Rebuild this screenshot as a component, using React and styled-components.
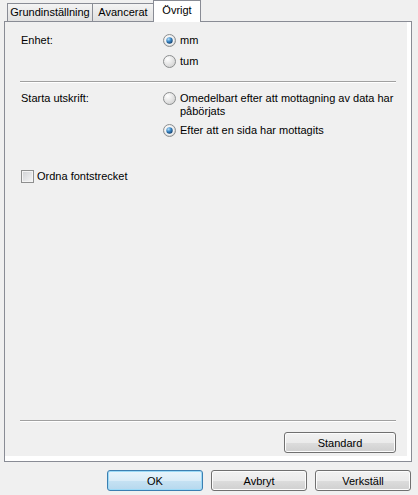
import styled, { createGlobalStyle } from 'styled-components';

const GlobalStyle = createGlobalStyle`
  html, body {
    margin: 0;
    padding: 0;
    background: #f0f0f0;
  }
  body {
    font-family: "Liberation Sans", Arial, sans-serif;
    font-size: 11px;
    color: #000;
  }
`;

const Dialog = styled.div`
  width: 418px;
  height: 495px;
  box-sizing: border-box;
  padding-left: 4px;
  display: flex;
  flex-direction: column;
  background: #f0f0f0;
`;

const TabStrip = styled.div`
  display: flex;
  align-items: flex-end;
  height: 21px;
  padding-left: 3px;
`;

const Tab = styled.div`
  box-sizing: border-box;
  width: ${(p) => p.$width}px;
  height: ${(p) => (p.$active ? 22 : 18)}px;
  margin-left: ${(p) => (p.$first ? 0 : -1)}px;
  margin-bottom: ${(p) => (p.$active ? -1 : 0)}px;
  padding-bottom: ${(p) => (p.$active ? 3 : 0)}px;
  border: 1px solid #898c95;
  border-bottom: none;
  background: ${(p) =>
    p.$active ? '#fff' : 'linear-gradient(#f4f4f4, #e9e9e9 50%, #e1e1e1)'};
  position: relative;
  z-index: ${(p) => (p.$active ? 2 : 1)};
  display: flex;
  align-items: center;
  justify-content: center;
  line-height: 13px;
  white-space: nowrap;
`;

const Panel = styled.div`
  box-sizing: border-box;
  width: 408px;
  height: 441px;
  border: 1px solid #898c95;
  background: #fff;
  padding: 0 4px 5px 0;
  display: flex;
`;

const Page = styled.div`
  flex: 1;
  background: #f0f0f0;
  display: flex;
  flex-direction: column;
  padding: 12px 11px 3px 15px;
`;

const Section = styled.div`
  display: grid;
  grid-template-columns: 143px 1fr;
  margin-top: ${(p) => p.$top || 0}px;
`;

const Label = styled.div`
  line-height: 13px;
  padding-left: 1px;
`;

const Options = styled.div`
  display: flex;
  flex-direction: column;
  gap: ${(p) => p.$gap}px;
`;

const Option = styled.label`
  display: flex;
  align-items: flex-start;
  gap: 4px;
  line-height: 13px;
`;

const Separator = styled.div`
  height: 1px;
  border-top: 1px solid #a0a0a0;
  margin-top: ${(p) => p.$top || 0}px;
  background: #fff;
`;

const CheckRow = styled.label`
  display: flex;
  align-items: center;
  gap: 3px;
  margin-top: 33px;
  margin-left: 1px;
  line-height: 13px;
`;

const CheckBox = styled.span`
  box-sizing: border-box;
  width: 13px;
  height: 13px;
  border: 1px solid #8e8f8f;
  background: linear-gradient(135deg, #cfd1d4, #f7f7f7);
  box-shadow: inset 0 0 0 1px #f4f4f4;
`;

const Spacer = styled.div`
  flex: 1;
`;

const Button = styled.button`
  box-sizing: border-box;
  width: ${(p) => p.$width || 96}px;
  height: 21px;
  padding: 0;
  font-family: inherit;
  font-size: 11px;
  color: #000;
  border-radius: 3px;
  border: 1px solid ${(p) => (p.$default ? '#3c7fb1' : '#707070')};
  background: ${(p) =>
    p.$default
      ? 'linear-gradient(#e8f4fb, #d9ecf8 50%, #c6e2f3 50%, #b6d8ee)'
      : 'linear-gradient(#f2f2f2, #ebebeb 50%, #dddddd 50%, #cfcfcf)'};
  box-shadow: inset 0 0 0 1px ${(p) => (p.$default ? '#9cdaf7' : '#fcfcfc')};
`;

const StandardRow = styled.div`
  display: flex;
  justify-content: flex-end;
  margin-top: 10px;
`;

const ButtonBar = styled.div`
  display: flex;
  justify-content: flex-end;
  gap: 8px;
  margin-top: 8px;
  padding-right: 7px;
`;

const RadioSvg = styled.svg`
  flex: none;
  width: 13px;
  height: 13px;
`;

const Radio = ({ checked }) => (
  <RadioSvg viewBox="0 0 13 13">
    <defs>
      <radialGradient id="rbg" cx="0.35" cy="0.3" r="0.8">
        <stop offset="0" stopColor="#ffffff" />
        <stop offset="1" stopColor="#cfcfcf" />
      </radialGradient>
      <radialGradient id="rdot" cx="0.35" cy="0.3" r="0.75">
        <stop offset="0" stopColor="#b4e0fb" />
        <stop offset="0.5" stopColor="#3b86c4" />
        <stop offset="1" stopColor="#113f6c" />
      </radialGradient>
    </defs>
    <circle cx="6.5" cy="6.5" r="6" fill="url(#rbg)" stroke="#8c8e8f" />
    {checked && (
      <>
        <circle cx="6.5" cy="6.5" r="4.5" fill="#f7f7f7" />
        <circle cx="6.5" cy="6.5" r="3.2" fill="url(#rdot)" />
      </>
    )}
  </RadioSvg>
);

const App = () => {
  return (
    <>
      <GlobalStyle />
      <Dialog>
        <TabStrip>
          <Tab $first $width={86}>Grundinställning</Tab>
          <Tab $width={62}>Avancerat</Tab>
          <Tab $active $width={48}>Övrigt</Tab>
        </TabStrip>
        <Panel>
          <Page>
            <Section>
              <Label>Enhet:</Label>
              <Options $gap={8}>
                <Option>
                  <Radio checked />
                  mm
                </Option>
                <Option>
                  <Radio />
                  tum
                </Option>
              </Options>
            </Section>
            <Separator $top={13} />
            <Section $top={9}>
              <Label>Starta utskrift:</Label>
              <Options $gap={6}>
                <Option>
                  <Radio />
                  <span>Omedelbart efter att mottagning av data har påbörjats</span>
                </Option>
                <Option>
                  <Radio checked />
                  Efter att en sida har mottagits
                </Option>
              </Options>
            </Section>
            <CheckRow>
              <CheckBox />
              Ordna fontstrecket
            </CheckRow>
            <Spacer />
            <Separator />
            <StandardRow>
              <Button $width={112}>Standard</Button>
            </StandardRow>
          </Page>
        </Panel>
        <ButtonBar>
          <Button $default>OK</Button>
          <Button>Avbryt</Button>
          <Button>Verkställ</Button>
        </ButtonBar>
      </Dialog>
    </>
  );
};

export default App;
